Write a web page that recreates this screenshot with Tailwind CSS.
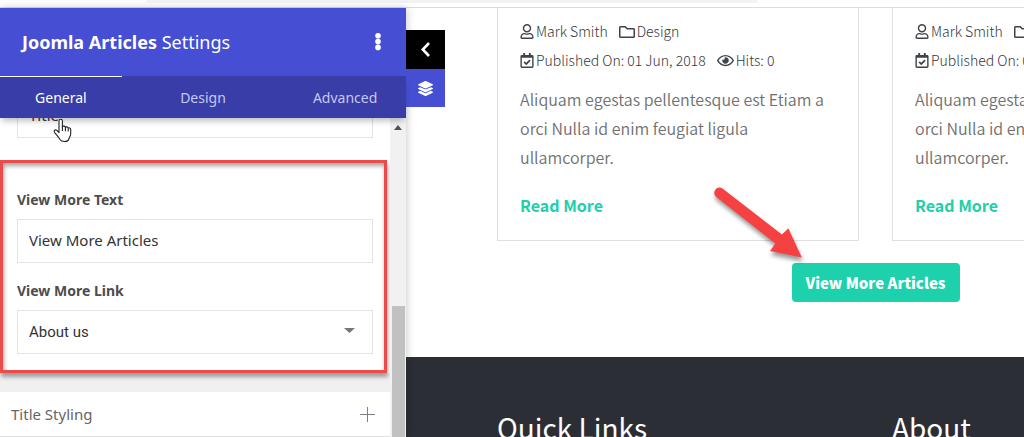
<!DOCTYPE html>
<html lang="en">
<head>
    <meta charset="UTF-8">
    <meta name="viewport" content="width=device-width, initial-scale=1.0">
    <title>Joomla Articles Settings</title>
    <script src="https://cdn.jsdelivr.net/npm/@tailwindcss/browser@4"></script>
</head>
<body class="h-screen flex flex-col overflow-hidden bg-white font-['Noto_Sans',sans-serif]">
    <!-- Icon sprite -->
    <svg class="hidden" aria-hidden="true">
        <symbol id="user" viewBox="0 0 448 512"><path d="M313.6 304c-28.700 0-42.500 16-89.600 16-47.100 0-60.800-16-89.600-16C60.200 304 0 364.200 0 438.400V464c0 26.500 21.500 48 48 48h352c26.500 0 48-21.500 48-48v-25.600c0-74.200-60.200-134.400-134.400-134.400zM400 464H48v-25.600c0-47.600 38.800-86.400 86.400-86.400 14.600 0 38.300 16 89.600 16 51.700 0 74.900-16 89.600-16 47.600 0 86.400 38.800 86.400 86.400V464zM224 288c79.500 0 144-64.500 144-144S303.500 0 224 0 80 64.500 80 144s64.500 144 144 144zm0-240c52.900 0 96 43.100 96 96s-43.100 96-96 96-96-43.100-96-96 43.100-96 96-96z"/></symbol>
        <symbol id="folder" viewBox="0 0 512 512"><path d="M464 128H272l-54.630-54.630c-6-6-14.140-9.370-22.630-9.370H48C21.490 64 0 85.490 0 112v288c0 26.510 21.490 48 48 48h416c26.510 0 48-21.490 48-48V176c0-26.510-21.490-48-48-48zm0 272H48V112h140.120l54.630 54.630c6 6 14.140 9.370 22.630 9.370H464v224z"/></symbol>
        <symbol id="calendar" viewBox="0 0 448 512"><path d="M400 64h-48V12c0-6.600-5.400-12-12-12h-40c-6.600 0-12 5.400-12 12v52H160V12c0-6.600-5.400-12-12-12h-40c-6.600 0-12 5.400-12 12v52H48C21.500 64 0 85.500 0 112v352c0 26.500 21.500 48 48 48h352c26.500 0 48-21.500 48-48V112c0-26.500-21.500-48-48-48zm0 400H48V160h352v304zM341 256l-23-23c-4-5-12-5-17 0L198 335l-44-45c-5-4-12-5-17 0l-23 23c-5 4-5 12 0 17l76 76c5 5 12 5 17 0l134-133c5-5 5-12 0-17z"/></symbol>
        <symbol id="eye" viewBox="0 0 576 512"><path d="M288 144a110.940 110.940 0 0 0-31.240 5 55.400 55.400 0 0 1 7.240 27 56 56 0 0 1-56 56 55.400 55.400 0 0 1-27-7.240A111.710 111.710 0 1 0 288 144zm284.520 97.400C518.290 135.590 410.930 64 288 64S57.680 135.640 3.480 241.410a32.350 32.350 0 0 0 0 29.190C57.710 376.410 165.070 448 288 448s230.320-71.640 284.520-177.410a32.350 32.350 0 0 0 0-29.190zM288 400c-98.650 0-189.090-55-237.930-144C98.910 167 189.340 112 288 112s189.090 55 237.930 144C477.100 345 386.660 400 288 400z"/></symbol>
        <symbol id="layers" viewBox="0 0 512 512"><path d="M12 149l232 105c8 4 17 4 25 0l232-105c16-8 16-34 0-41L269 2c-8-3-17-3-25 0L12 108c-16 7-16 33 0 41zM500 236l-58-26-161 73c-16 7-33 7-49 0L71 210l-58 26c-16 7-16 33 0 40l232 105c8 4 17 4 25 0l230-105c16-7 16-33 0-40zM500 364l-58-27-161 73c-16 7-33 7-49 0L71 337l-58 27c-16 7-16 33 0 40l232 105c8 4 17 4 25 0l230-105c16-7 16-33 0-40z"/></symbol>
    </svg>

    <!-- Browser bar -->
    <div class="h-2 shrink-0 border-b border-[#d9dce0] bg-white">
        <div class="ml-[146px] mr-[266px] h-[3px] rounded-b-lg bg-[#f1f3f4]"></div>
    </div>

    <div class="flex min-h-0 flex-1">
        <!-- Settings panel -->
        <aside class="relative z-10 flex w-[406px] shrink-0 flex-col bg-[#f0f0f0] shadow-[1px_0_8px_rgba(0,0,0,0.2)]">
            <header class="relative z-10 bg-[#464ed4]">
                <div class="flex h-[68px] items-center justify-between pl-[22px] pr-[23px] text-white">
                    <h1 class="text-[18px]"><strong class="font-bold">Joomla Articles</strong> Settings</h1>
                    <button type="button" aria-label="More options">
                        <svg class="h-[18px] w-[10px]" viewBox="0 0 10 18" fill="#fff"><circle cx="5" cy="2.800" r="2.800"/><circle cx="5" cy="8.600" r="2.800"/><circle cx="5" cy="14.400" r="2.800"/></svg>
                    </button>
                </div>
                <nav class="grid h-[42px] grid-cols-[3fr_4fr_3fr] bg-[#383da8] text-[14px] text-[#c5c8f1] shadow-[0_5px_6px_-2px_rgba(0,0,0,0.25)]">
                    <button type="button" class="border-t border-white text-white">General</button>
                    <button type="button" class="border-t border-transparent">Design</button>
                    <button type="button" class="border-t border-transparent">Advanced</button>
                </nav>
            </header>

            <div class="flex min-h-0 flex-1">
                <div class="min-w-0 flex-1 overflow-hidden">
                    <form class="bg-white">
                        <div class="-mt-6 pl-[17px] pr-[17px]">
                            <input type="text" value="Title" aria-label="Title" class="h-11 w-full border border-[#e3e3e3] px-[11px] pb-[2px] text-[15px] text-[#333]">
                        </div>
                        <section class="mr-[3px] mt-[22px] border-[3px] border-[#ec4b4b] pb-4 pl-[14px] pr-[11px] pt-[27px] shadow-[1px_4px_4px_rgba(0,0,0,0.35),inset_1px_3px_4px_rgba(0,0,0,0.35)]">
                            <label for="viewText" class="block text-[14px] leading-5 font-bold text-[#4d4d4d]">View More Text</label>
                            <input id="viewText" type="text" value="View More Articles" class="mt-[9px] h-11 w-full border border-[#e3e3e3] px-[11px] pb-[2px] text-[15px] text-[#333]">
                            <label for="viewLink" class="mt-[18px] block text-[14px] leading-5 font-bold text-[#4d4d4d]">View More Link</label>
                            <div class="relative mt-[9px]">
                                <select id="viewLink" class="h-11 w-full appearance-none border border-[#e3e3e3] px-[11px] font-['Roboto',sans-serif] text-[15px] text-[#333]">
                                    <option>About us</option>
                                    <option>Home</option>
                                </select>
                                <svg class="pointer-events-none absolute right-[18px] top-[18px] h-[5px] w-[11px]" viewBox="0 0 11 5"><path d="M0 0h11L5.500 5z" fill="#777"/></svg>
                            </div>
                        </section>
                    </form>
                    <button type="button" class="mt-[19px] flex h-[45px] w-full items-center justify-between border-b border-[#e0e0e0] bg-white pl-[11px] pr-[15px] text-[15px] text-[#666]">
                        Title Styling
                        <svg class="size-[15px]" viewBox="0 0 15 15" stroke="#76808c" stroke-width="1"><path d="M7.500 0v15M0 7.500h15"/></svg>
                    </button>
                </div>
                <!-- Scrollbar -->
                <div class="flex w-4 shrink-0 flex-col items-center bg-[#f1f1f1] pt-[7px]">
                    <svg class="h-[5px] w-[8px] shrink-0" viewBox="0 0 8 5"><path d="M0 5h8L4 0z" fill="#505050"/></svg>
                    <div class="mt-44 w-[13px] flex-1 bg-[#c1c1c1]"></div>
                </div>
            </div>

            <!-- Panel handles -->
            <div class="absolute left-full top-[22px] flex w-[39px] flex-col">
                <button type="button" aria-label="Collapse" class="flex h-[39px] items-center justify-center bg-black">
                    <svg class="h-[15px] w-[10px]" viewBox="0 0 10 15" fill="none" stroke="#fff" stroke-width="2.600"><path d="M8 1L1.800 7.500 8 14"/></svg>
                </button>
                <button type="button" aria-label="Layers" class="flex h-[38px] items-center justify-center bg-[#464ed4]">
                    <svg class="size-[15px]" fill="#fff"><use href="#layers"/></svg>
                </button>
            </div>

            <!-- Hand pointer -->
            <svg class="absolute left-[53px] top-[110px] z-20 h-[25px] w-[19px]" viewBox="0 0 19 25"><path d="M6 14.500V3a1.700 1.700 0 0 1 3.400 0v6c.2-1.300 2.900-1.200 3 .5.500-1.100 2.700-.8 2.800.8.600-.9 2.500-.5 2.500 1.200V16c0 2-1.500 3.200-1.800 5-.5 1.800-2 2.500-4.400 2.500-2.700 0-3.700-.7-4.700-2.300C5.500 18.500 3 16.500 1.400 14.200c-.9-1.500.8-3 2.200-2z" fill="#fff" stroke="#222" stroke-width="1.100" stroke-linejoin="round"/><path d="M9.400 8.500v4.500M12.400 9.500v3.800M15.200 10.500v3" stroke="#222" stroke-width="1.100"/></svg>
        </aside>

        <!-- Page preview -->
        <main class="relative flex min-w-0 flex-1 flex-col overflow-hidden font-['Noto_Sans_CJK_JP',sans-serif]">
            <div class="ml-[91px] grid w-[757px] grid-cols-2 gap-x-[33px]">
                <article class="h-[233px] border border-t-0 border-[#e0e0e0] pl-[22px] pt-[9px]">
                    <div class="flex flex-wrap gap-x-[11px] text-[14px] leading-[29px] font-light text-[#33373d]">
                        <span class="flex items-center gap-[2px]"><svg class="h-[15px] w-[14px]" fill="#3f444b"><use href="#user"/></svg>Mark Smith</span>
                        <span class="flex items-center gap-[2px]"><svg class="size-[16px]" fill="#3f444b"><use href="#folder"/></svg>Design</span>
                    </div>
                    <div class="flex gap-x-[11px] text-[14px] leading-[29px] font-light text-[#33373d]">
                        <span class="flex items-center gap-[2px]"><svg class="h-[15px] w-[14px]" fill="#3f444b"><use href="#calendar"/></svg>Published On: 01 Jun, 2018</span>
                        <span class="flex items-center gap-[2px]"><svg class="h-[15px] w-[17px]" fill="#3f444b"><use href="#eye"/></svg>Hits: 0</span>
                    </div>
                    <p class="mt-[10px] pr-6 text-[16px] leading-[29px] font-[350] text-[#707070]">Aliquam egestas pellentesque est Etiam a orci Nulla id enim feugiat ligula ullamcorper.</p>
                    <a href="#" class="mt-[19px] block text-[16px] leading-[29px] font-bold text-[#22cfa9]">Read More</a>
                </article>
                <article class="h-[233px] border border-t-0 border-[#e0e0e0] pl-[22px] pt-[9px]">
                    <div class="flex flex-wrap gap-x-[11px] text-[14px] leading-[29px] font-light text-[#33373d]">
                        <span class="flex items-center gap-[2px]"><svg class="h-[15px] w-[14px]" fill="#3f444b"><use href="#user"/></svg>Mark Smith</span>
                        <span class="flex items-center gap-[2px]"><svg class="size-[16px]" fill="#3f444b"><use href="#folder"/></svg>Design</span>
                    </div>
                    <div class="flex gap-x-[11px] text-[14px] leading-[29px] font-light text-[#33373d]">
                        <span class="flex items-center gap-[2px]"><svg class="h-[15px] w-[14px]" fill="#3f444b"><use href="#calendar"/></svg>Published On: 01 Jun, 2018</span>
                        <span class="flex items-center gap-[2px]"><svg class="h-[15px] w-[17px]" fill="#3f444b"><use href="#eye"/></svg>Hits: 0</span>
                    </div>
                    <p class="mt-[10px] pr-6 text-[16px] leading-[29px] font-[350] text-[#707070]">Aliquam egestas pellentesque est Etiam a orci Nulla id enim feugiat ligula ullamcorper.</p>
                    <a href="#" class="mt-[19px] block text-[16px] leading-[29px] font-bold text-[#22cfa9]">Read More</a>
                </article>
                <div class="col-span-2 mt-[22px] flex justify-center">
                    <button type="button" class="h-[39px] rounded bg-[#1dd1ad] px-[14px] pt-[2px] text-[15px] font-black text-white">View More Articles</button>
                </div>
            </div>

            <footer class="mt-[55px] flex-1 bg-[#2c2e36] pl-[91px] pt-[50px]">
                <div class="grid w-[757px] grid-cols-2 gap-x-[33px] text-[28px] leading-10 text-white">
                    <h2>Quick Links</h2>
                    <h2>About</h2>
                </div>
            </footer>

            <!-- Callout arrow -->
            <svg class="pointer-events-none absolute left-[304px] top-[174px] h-[90px] w-[104px] drop-shadow-[1px_4px_2px_rgba(0,0,0,0.4)]" viewBox="710 182 104 90" fill="#f64143"><path d="M722.500 188.600L782 234.500l6.300-6.200 13.500 29.200-31.800-6.600 5.300-7.500-59-46.500a5 5 0 0 1 6.200-8.300z"/></svg>
        </main>
    </div>
</body>
</html>
